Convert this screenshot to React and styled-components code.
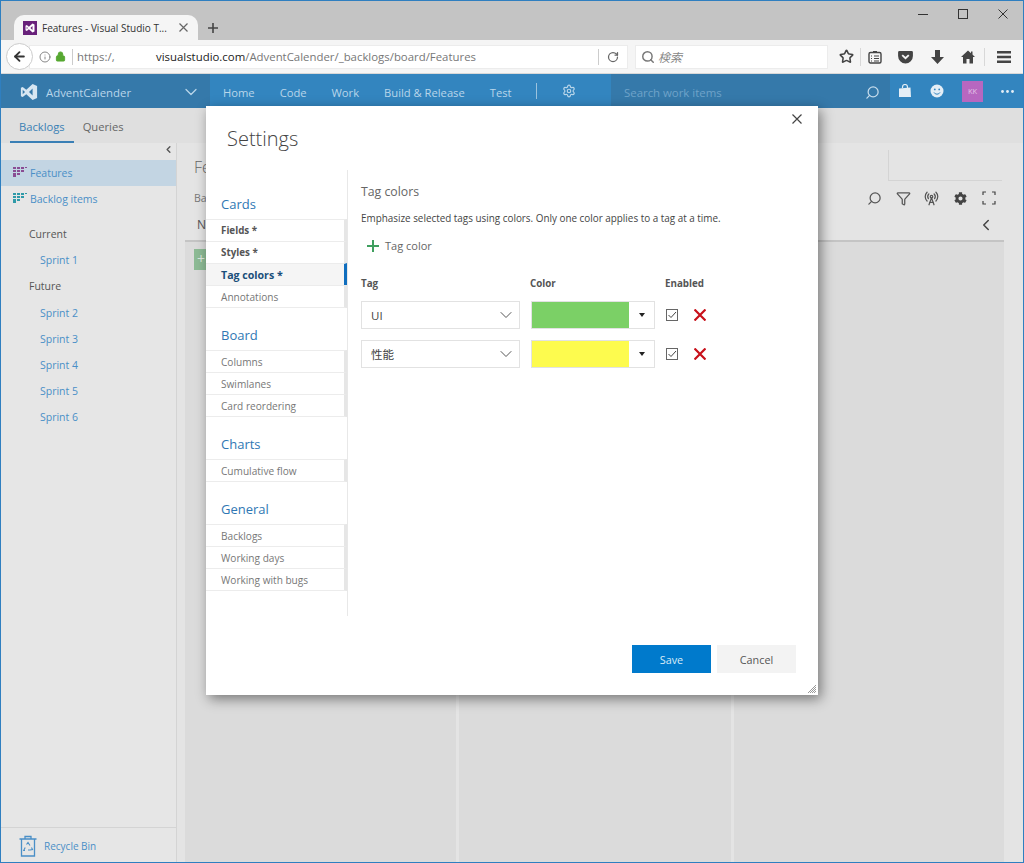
import React from "react"
import styled, { createGlobalStyle } from "styled-components"
import { ChevronDown, ChevronLeft, Search, Filter, Settings as Gear, RotateCw, Star, ArrowLeft, Info, Lock, RadioTower } from "lucide-react"
import { FaCog } from "react-icons/fa"

const Global = createGlobalStyle`
  html, body { margin: 0; padding: 0; background: #c4c4c4; }
  body { font-family: "Open Sans", "Noto Sans CJK JP", sans-serif; font-size: 11px; overflow: hidden; }
`

const Win = styled.div`
  position: relative;
  width: 1024px;
  height: 863px;
  box-sizing: border-box;
  border: 1px solid #2f7fc0;
  display: flex;
  flex-direction: column;
  overflow: hidden;
`
const TitleBar = styled.div`
  height: 39px;
  background: #c4c4c4;
  display: flex;
  align-items: flex-end;
  padding-left: 13px;
  flex: none;
`
const Tab = styled.div`
  width: 184px;
  height: 25px;
  background: #f5f5f5;
  border-radius: 10px 10px 0 0;
  display: flex;
  align-items: center;
  padding: 0 10px 0 9px;
  box-sizing: border-box;
  color: #333;
  font-size: 10px;
  gap: 5px;
`
const TabTitle = styled.span`
  flex: 1;
  white-space: nowrap;
`
const Favicon = styled.svg`
  width: 14px;
  height: 14px;
  flex: none;
`
const NewTab = styled.div`
  margin: 0 0 7px 10px;
  display: flex;
`
const WinButtons = styled.div`
  margin-left: auto;
  align-self: flex-start;
  display: flex;
  gap: 30px;
  padding: 8px 15px 0 0;
  color: #333;
`
const WinMin = styled.div`
  width: 10px;
  height: 10px;
  position: relative;
  &::after {
    content: "";
    position: absolute;
    left: 0;
    right: 0;
    top: 5px;
    height: 1px;
    background: #333;
  }
`
const WinMax = styled.div`
  width: 8px;
  height: 8px;
  border: 1px solid #333;
`
const Toolbar = styled.div`
  height: 34px;
  flex: none;
  background: #f5f5f5;
  border-bottom: 1px solid #d8d8d8;
  box-sizing: border-box;
  display: flex;
  align-items: center;
  padding-left: 5px;
`
const BackBtn = styled.div`
  width: 27px;
  height: 27px;
  border-radius: 50%;
  border: 1px solid #ccc;
  background: #fff;
  box-sizing: border-box;
  display: flex;
  align-items: center;
  justify-content: center;
  color: #333;
  flex: none;
  z-index: 1;
`
const UrlBar = styled.div`
  width: 599px;
  height: 24px;
  margin-left: -4px;
  background: #fff;
  border: 1px solid #ececec;
  display: flex;
  align-items: center;
  padding-left: 9px;
  box-sizing: border-box;
  font-size: 11.4px;
  color: #777;
  white-space: nowrap;
  flex: none;
  svg { flex: none; }
`
const UrlScheme = styled.span`
  margin-left: 4px;
  width: 79px;
  flex: none;
`
const UrlMain = styled.span`
  color: #222;
`
const UrlPath = styled.span`
  flex: 1;
`
const Sep = styled.span`
  width: 1px;
  height: 16px;
  background: ${p => p.$color || "#ccc"};
  flex: none;
  margin-left: ${p => p.$left || 0}px;
`
const SearchBox = styled.div`
  width: 193px;
  height: 24px;
  margin-left: 7px;
  background: #fff;
  border: 1px solid #ececec;
  display: flex;
  align-items: center;
  gap: 3px;
  padding-left: 5px;
  box-sizing: border-box;
  color: #888;
  font-style: italic;
  font-size: 12px;
  flex: none;
`
const ToolSlot = styled.div`
  width: ${p => p.$w}px;
  height: 18px;
  flex: none;
  display: flex;
  align-items: center;
  justify-content: center;
  color: #444;
  box-sizing: border-box;
  border-left: ${p => (p.$sep ? "1px solid #d8d8d8" : "none")};
`
const ToolIcons = styled.div`
  display: flex;
  align-items: center;
  margin-left: 4px;
`
const NavBar = styled.div`
  height: 34px;
  flex: none;
  background: #3385bf;
  display: flex;
  align-items: center;
  color: #b9d6ea;
  font-size: 11.2px;
`
const Project = styled.div`
  width: 209px;
  height: 100%;
  flex: none;
  background: #3579aa;
  display: flex;
  align-items: center;
  padding: 2px 9px 0 19px;
  box-sizing: border-box;
  gap: 8px;
`
const ProjectName = styled.span`
  flex: 1;
  font-size: 11.4px;
`
const NavItem = styled.span`
  margin-left: ${p => p.$left}px;
  padding-top: 2px;
  white-space: nowrap;
`
const NavSearch = styled.div`
  width: 279px;
  height: 100%;
  margin-left: auto;
  background: #3579aa;
  flex: none;
  display: flex;
  align-items: center;
  justify-content: space-between;
  padding: 2px 10px 0 13px;
  box-sizing: border-box;
  color: #6fa3c9;
  font-size: 11.4px;
`
const NavIcons = styled.div`
  width: 133px;
  flex: none;
  box-sizing: border-box;
  display: flex;
  align-items: center;
  gap: 18px;
  padding-left: 8px;
`
const Avatar = styled.div`
  width: 21px;
  height: 21px;
  background: #b767c0;
  color: #e3c3e6;
  font-size: 7.5px;
  display: flex;
  align-items: center;
  justify-content: center;
`
const SubNav = styled.div`
  height: 35px;
  flex: none;
  background: #dfdfdf;
  display: flex;
  padding-left: 9px;
  font-size: 11.2px;
  color: #666;
`
const SubTab = styled.div`
  padding: 4px 9px 0;
  height: 100%;
  box-sizing: border-box;
  display: flex;
  align-items: center;
  justify-content: center;
  color: ${p => (p.$active ? "#3a7fb5" : "#666")};
  border-bottom: 2px solid ${p => (p.$active ? "#3a7fb5" : "transparent")};
`
const Body = styled.div`
  flex: 1;
  display: flex;
  min-height: 0;
`
const Side = styled.div`
  width: 175px;
  flex: none;
  background: #e6e6e6;
  border-right: 1px solid #d4d4d4;
  display: flex;
  flex-direction: column;
`
const Collapse = styled.div`
  height: 17px;
  box-sizing: border-box;
  padding: 0 2px 4px 0;
  display: flex;
  justify-content: flex-end;
  align-items: center;
  color: #555;
`
const SideRow = styled.div`
  height: 26px;
  flex: none;
  display: flex;
  align-items: center;
  gap: 2px;
  padding-left: ${p => p.$pad || 12}px;
  background: ${p => (p.$active ? "#c3d5e3" : "transparent")};
  color: ${p => p.$color || "#4a8fc7"};
  font-size: 10.5px;
`
const SideGap = styled.div`
  height: ${p => p.$h}px;
  flex: none;
`
const Bin = styled.div`
  margin-top: auto;
  height: 35px;
  border-top: 1px solid #d4d4d4;
  box-sizing: border-box;
  display: flex;
  align-items: center;
  gap: 7px;
  padding: 1px 0 0 18px;
  color: #4a8fc7;
  font-size: 10px;
`
const Main = styled.div`
  flex: 1;
  background: #e4e4e4;
  display: flex;
  flex-direction: column;
  padding-left: 8px;
  min-width: 0;
`
const MainHead = styled.div`
  height: 97px;
  flex: none;
  box-sizing: border-box;
  display: flex;
  justify-content: space-between;
  align-items: flex-start;
  padding: 7px 21px 0 9px;
`
const HeadText = styled.div`
  display: flex;
  flex-direction: column;
`
const MainTitle = styled.div`
  color: #666;
  font-size: 16px;
  font-weight: 300;
  line-height: 22px;
  margin-top: 6px;
`
const MainCrumb = styled.div`
  color: #777;
  font-size: 10.5px;
  line-height: 14px;
  margin-top: 13px;
`
const MainCol = styled.div`
  color: #555;
  font-size: 12px;
  line-height: 16px;
  margin: 12px 0 0 3px;
`
const Corner = styled.div`
  width: 114px;
  height: 31px;
  box-sizing: border-box;
  border-left: 1px solid #d4d4d4;
  border-bottom: 1px solid #d4d4d4;
`
const BoardTools = styled.div`
  position: absolute;
  right: 20px;
  top: 189px;
  display: flex;
  align-items: center;
  color: #555;
`
const BoardTool = styled.div`
  width: 28.5px;
  height: 16px;
  display: flex;
  align-items: center;
  justify-content: center;
`
const BoardBack = styled.div`
  position: absolute;
  right: 28px;
  top: 215px;
  color: #444;
  display: flex;
`
const Board = styled.div`
  flex: 1;
  border-top: 2px solid #c4c4c4;
  margin-right: 19px;
  display: grid;
  grid-template-columns: 271px 272px 1fr;
  gap: 3px;
`
const Lane = styled.div`
  background: #dbdbdb;
  position: relative;
`
const AddBadge = styled.div`
  position: absolute;
  left: 9px;
  top: 7px;
  width: 18px;
  height: 21px;
  background: #8dbb95;
  color: #dfe9e0;
  font-size: 14px;
  line-height: 20px;
  padding-left: 3px;
  box-sizing: border-box;
`
const Modal = styled.div`
  position: absolute;
  left: 205px;
  top: 105px;
  width: 612px;
  height: 589px;
  background: #fff;
  box-shadow: 3px 4px 12px rgba(0, 0, 0, 0.45);
  display: flex;
  flex-direction: column;
`
const CloseBtn = styled.div`
  position: absolute;
  right: 16px;
  top: 8px;
  color: #444;
  display: flex;
`
const ModalTitle = styled.div`
  height: 64px;
  flex: none;
  padding: 19px 0 0 21px;
  box-sizing: border-box;
  font-size: 20px;
  font-weight: 300;
  color: #444;
  line-height: 28px;
`
const ModalBody = styled.div`
  height: 446px;
  flex: none;
  display: flex;
`
const SettingsMenu = styled.div`
  width: 141px;
  flex: none;
  border-right: 1px solid #e8e8e8;
`
const GroupTitle = styled.div`
  height: ${p => (p.$first ? 49 : 42)}px;
  box-sizing: border-box;
  padding: ${p => (p.$first ? 19 : 12)}px 0 0 15px;
  font-size: 13px;
  line-height: 30px;
  color: #2f77b4;
`
const MenuItem = styled.div`
  height: 22px;
  box-sizing: border-box;
  display: flex;
  align-items: center;
  padding-left: 15px;
  border-top: 1px solid #ececec;
  border-right: 3px solid ${p => (p.$active ? "#106ebe" : "#e6e6e6")};
  font-size: ${p => (p.$active ? 10.6 : p.$bold ? 9.8 : 10.1)}px;
  font-weight: ${p => (p.$bold ? 700 : 400)};
  color: ${p => (p.$active ? "#1b4f7a" : p.$bold ? "#555" : "#777")};
  background: ${p => (p.$active ? "#f5f5f5" : "#fff")};
  &:last-child { border-bottom: 1px solid #ececec; height: 23px; }
`
const Group = styled.div``
const Pane = styled.div`
  flex: 1;
  padding: 13px 0 0 13px;
  color: #444;
`
const PaneTitle = styled.div`
  font-size: 12.3px;
  color: #666;
  line-height: 18px;
`
const PaneDesc = styled.div`
  font-size: 9.9px;
  color: #444;
  margin-top: 10px;
  line-height: 14px;
`
const AddTag = styled.div`
  display: flex;
  align-items: center;
  gap: 6px;
  margin: 13px 0 0 6px;
  font-size: 11px;
  color: #666;
  line-height: 16px;
`
const Grid = styled.div`
  display: grid;
  grid-template-columns: 159px 124px 1fr;
  column-gap: 11px;
  margin-top: 23px;
`
const HeadCell = styled.div`
  font-size: 9.8px;
  font-weight: 700;
  color: #555;
  height: 18px;
  margin: 0 0 6px ${p => (p.$nudge ? -1 : 0)}px;
  line-height: 14px;
`
const SelectBox = styled.div`
  height: 28px;
  box-sizing: border-box;
  border: 1px solid #e2e2e2;
  display: flex;
  align-items: center;
  justify-content: space-between;
  padding: 0 3px 0 9px;
  font-size: 11.5px;
  color: #444;
  margin-bottom: 11px;
`
const ColorBox = styled.div`
  height: 28px;
  box-sizing: border-box;
  border: 1px solid #e2e2e2;
  display: flex;
  margin-bottom: 11px;
`
const Swatch = styled.div`
  width: 97px;
  background: ${p => p.$color};
`
const Caret = styled.div`
  flex: 1;
  display: flex;
  align-items: center;
  justify-content: center;
  &::after {
    content: "";
    border-left: 3.5px solid transparent;
    border-right: 3.5px solid transparent;
    border-top: 4px solid #222;
  }
`
const EnabledCell = styled.div`
  height: 28px;
  display: flex;
  align-items: center;
  gap: 16px;
`
const CheckBox = styled.div`
  width: 10px;
  height: 10px;
  border: 1px solid #666;
  display: flex;
  align-items: center;
  justify-content: center;
  color: #333;
`
const Footer = styled.div`
  display: flex;
  justify-content: flex-end;
  gap: 6px;
  padding: 29px 22px 0 0;
`
const Btn = styled.div`
  width: 79px;
  height: 28px;
  display: flex;
  align-items: center;
  justify-content: center;
  font-size: 10.8px;
  background: ${p => (p.$primary ? "#007acc" : "#f3f3f3")};
  color: ${p => (p.$primary ? "#d9ecf8" : "#555")};
`
const Grip = styled.svg`
  position: absolute;
  right: 1px;
  bottom: 1px;
`

function Cross({ size, color = "currentColor", width = 1.2 }) {
  return (
    <svg width={size} height={size} viewBox={`0 0 ${size} ${size}`} fill="none" stroke={color} strokeWidth={width} style={{ flex: "none" }}>
      <path d={`M0.5 0.5L${size - 0.5} ${size - 0.5}M${size - 0.5} 0.5L0.5 ${size - 0.5}`} />
    </svg>
  )
}

function PlusMark({ size, color, width }) {
  const m = size / 2
  return (
    <svg width={size} height={size} viewBox={`0 0 ${size} ${size}`} fill="none" stroke={color} strokeWidth={width} style={{ flex: "none" }}>
      <path d={`M${m} 0V${size}M0 ${m}H${size}`} />
    </svg>
  )
}

function BacklogIcon({ color }) {
  return (
    <svg width="14" height="10" viewBox="0 0 14 10" fill={color} style={{ flex: "none", marginRight: 1, marginTop: -3 }}>
      <path d="M0 0h3v2H0zM4 0h3v2H4zM8 0h3v2H8zM12 0h2v1h-2zM0 3h3v2H0zM4 3h3v2H4zM8 3h3v2H8zM0 6h3v2H0zM4 6h3v2H4zM0 8h3v2H0z" />
    </svg>
  )
}

function VsLogo({ color, size }) {
  return (
    <svg width={size} height={size} viewBox="0 0 20 20" fill={color} style={{ flex: "none" }}>
      <path d="M14 1l5 2.2v13.6L14 19l-7-6.4L3 15.6 1 14.6V5.4l2-1 4 3zM14 6l-4 4 4 4zM3 7.4v5.2L5.6 10z" fillRule="evenodd" />
    </svg>
  )
}

function ClipIcon() {
  return (
    <svg width="14" height="14" viewBox="0 0 14 14" fill="none" stroke="#444" strokeWidth="1.4">
      <rect x="1" y="2.5" width="12" height="10.5" rx="1.5" />
      <path d="M5 1.5h4M3 6h1M6 6h5M3 8.5h1M6 8.5h5M3 11h1M6 11h5" strokeWidth="1.1" />
    </svg>
  )
}

function PocketIcon() {
  return (
    <svg width="15" height="14" viewBox="0 0 16 14">
      <path d="M1.5 0.5h13a1.4 1.4 0 0 1 1.4 1.4V6a7.9 7.9 0 0 1-15.8 0V1.9A1.4 1.4 0 0 1 1.5 0.5z" fill="#444" />
      <path d="M4.5 5L8 8.3 11.5 5" fill="none" stroke="#f5f5f5" strokeWidth="2" />
    </svg>
  )
}

function DownIcon() {
  return (
    <svg width="13" height="14" viewBox="0 0 13 14" fill="#444">
      <path d="M4 0h5v7h4l-6.5 7L0 7h4z" />
    </svg>
  )
}

function HomeIcon() {
  return (
    <svg width="14" height="14" viewBox="0 0 14 14" fill="#444">
      <path d="M7 0.5L0 7h2v6.5h3.5V9h3v4.5H12V7h2L11.5 4.6V1.5H10v1.7z" />
    </svg>
  )
}

function BurgerIcon() {
  return (
    <svg width="14" height="12" viewBox="0 0 14 12" fill="#444">
      <path d="M0 0h14v2.4H0zM0 4.8h14v2.4H0zM0 9.6h14V12H0z" />
    </svg>
  )
}

function BagIcon() {
  return (
    <svg width="14" height="14" viewBox="0 0 14 14">
      <path d="M4.5 4V3a2.5 2.5 0 0 1 5 0v1" fill="none" stroke="#e4eef6" strokeWidth="1.2" />
      <path d="M1 4.5L12.5 3.5 13 13H1z" fill="#e4eef6" />
    </svg>
  )
}

function SmileIcon() {
  return (
    <svg width="14" height="14" viewBox="0 0 14 14">
      <circle cx="7" cy="7" r="6.5" fill="#e4eef6" />
      <circle cx="4.8" cy="5.4" r="0.9" fill="#3385bf" />
      <circle cx="9.2" cy="5.4" r="0.9" fill="#3385bf" />
      <path d="M4 8.4a3.4 3.4 0 0 0 6 0" fill="none" stroke="#3385bf" strokeWidth="1" />
    </svg>
  )
}

function DotsIcon() {
  return (
    <svg width="13" height="3" viewBox="0 0 13 3" fill="#e4eef6">
      <circle cx="1.5" cy="1.5" r="1.4" />
      <circle cx="6.5" cy="1.5" r="1.4" />
      <circle cx="11.5" cy="1.5" r="1.4" />
    </svg>
  )
}

function CheckMark() {
  return (
    <svg width="10" height="8" viewBox="0 0 10 8" fill="none" stroke="#444" strokeWidth="1" style={{ flex: "none" }}>
      <path d="M1.5 4l2.5 2.5 5-5.5" />
    </svg>
  )
}

function RecycleIcon() {
  return (
    <svg width="18" height="22" viewBox="0 0 18 22" fill="none" stroke="#4a8fc7" strokeWidth="1.3" style={{ flex: "none" }}>
      <path d="M0.5 4h17M6 4V1.5h6V4M2.5 4v17h13V4" />
      <path d="M7.5 9.5L9 7.5l2 3M12.5 12.5l1 2-2.5.5H9M6 15.5H4.7l1.5-3" strokeWidth="1.1" />
    </svg>
  )
}

const groups = [
  { title: "Cards", first: true, items: [["Fields *", 1], ["Styles *", 1], ["Tag colors *", 2], ["Annotations", 0]] },
  { title: "Board", items: [["Columns", 0], ["Swimlanes", 0], ["Card reordering", 0]] },
  { title: "Charts", items: [["Cumulative flow", 0]] },
  { title: "General", items: [["Backlogs", 0], ["Working days", 0], ["Working with bugs", 0]] },
]

const tags = [
  { name: "UI", color: "#7bd066" },
  { name: "性能", color: "#fdfb4e" },
]

export default function App() {
  return (
    <Win>
      <Global />
      <TitleBar>
        <Tab>
          <Favicon viewBox="0 0 14 14">
            <rect width="14" height="14" fill="#68217a" />
            <path d="M9.5 2.5l2 1v7l-2 1-3.6-3.3L3.8 10 2.5 9.3V4.7L3.8 4l2.1 1.8zM9.5 5L7.4 7l2.1 2zM3.7 5.8v2.4L4.9 7z" fill="#fff" fillRule="evenodd" />
          </Favicon>
          <TabTitle>Features - Visual Studio T...</TabTitle>
          <Cross size={9} color="#666" />
        </Tab>
        <NewTab><PlusMark size={10} color="#444" width={1.6} /></NewTab>
        <WinButtons>
          <WinMin />
          <WinMax />
          <Cross size={10} color="#333" width={1} />
        </WinButtons>
      </TitleBar>
      <Toolbar>
        <BackBtn><ArrowLeft size={15} strokeWidth={3} /></BackBtn>
        <UrlBar>
          <Info size={12} color="#888" />
          <Lock size={11} color="#57a831" fill="#57a831" style={{ marginLeft: 4 }} />
          <Sep $left={6} />
          <UrlScheme>https:/,</UrlScheme>
          <UrlPath><UrlMain>visualstudio.com</UrlMain>/AdventCalender/_backlogs/board/Features</UrlPath>
          <Sep />
          <RotateCw size={12} color="#666" strokeWidth={2.5} style={{ margin: "0 8px" }} />
        </UrlBar>
        <SearchBox><Search size={14} strokeWidth={2.5} color="#777" />検索</SearchBox>
        <ToolIcons>
          <ToolSlot $w={28}><Star size={15} strokeWidth={2.5} color="#444" /></ToolSlot>
          <ToolSlot $w={28} $sep><ClipIcon /></ToolSlot>
          <ToolSlot $w={34}><PocketIcon /></ToolSlot>
          <ToolSlot $w={30}><DownIcon /></ToolSlot>
          <ToolSlot $w={32}><HomeIcon /></ToolSlot>
          <ToolSlot $w={38} $sep><BurgerIcon /></ToolSlot>
        </ToolIcons>
      </Toolbar>
      <NavBar>
        <Project>
          <VsLogo color="#d6e6f2" size={18} />
          <ProjectName>AdventCalender</ProjectName>
          <ChevronDown size={20} strokeWidth={1.5} />
        </Project>
        <NavItem $left={13}>Home</NavItem>
        <NavItem $left={25}>Code</NavItem>
        <NavItem $left={25}>Work</NavItem>
        <NavItem $left={25}>Build &amp; Release</NavItem>
        <NavItem $left={25}>Test</NavItem>
        <Sep $left={25} $color="#9cc3de" />
        <Gear size={14} style={{ marginLeft: 25 }} />
        <NavSearch>Search work items<Search size={15} color="#c6dcec" style={{ transform: "scaleX(-1)" }} /></NavSearch>
        <NavIcons>
          <BagIcon />
          <SmileIcon />
          <Avatar>KK</Avatar>
          <DotsIcon />
        </NavIcons>
      </NavBar>
      <SubNav>
        <SubTab $active>Backlogs</SubTab>
        <SubTab>Queries</SubTab>
      </SubNav>
      <Body>
        <Side>
          <Collapse><ChevronLeft size={11} strokeWidth={3} /></Collapse>
          <SideRow $active><BacklogIcon color="#8a4d93" />Features</SideRow>
          <SideRow><BacklogIcon color="#2f9aa8" />Backlog items</SideRow>
          <SideGap $h={9} />
          <SideRow $pad={28} $color="#555">Current</SideRow>
          <SideRow $pad={39}>Sprint 1</SideRow>
          <SideRow $pad={28} $color="#555">Future</SideRow>
          <SideGap $h={1} />
          <SideRow $pad={39}>Sprint 2</SideRow>
          <SideRow $pad={39}>Sprint 3</SideRow>
          <SideRow $pad={39}>Sprint 4</SideRow>
          <SideRow $pad={39}>Sprint 5</SideRow>
          <SideRow $pad={39}>Sprint 6</SideRow>
          <Bin>
            <RecycleIcon />
            Recycle Bin
          </Bin>
        </Side>
        <Main>
          <MainHead>
            <HeadText>
              <MainTitle>Fe</MainTitle>
              <MainCrumb>Ba</MainCrumb>
              <MainCol>N</MainCol>
            </HeadText>
            <Corner />
          </MainHead>
          <Board>
            <Lane><AddBadge>+</AddBadge></Lane>
            <Lane />
            <Lane />
          </Board>
        </Main>
      </Body>
      <BoardTools>
        <BoardTool><Search size={15} style={{ transform: "scaleX(-1)" }} /></BoardTool>
        <BoardTool><Filter size={15} /></BoardTool>
        <BoardTool><RadioTower size={15} /></BoardTool>
        <BoardTool><FaCog size={13} color="#444" /></BoardTool>
        <BoardTool>
          <svg width="14" height="14" viewBox="0 0 14 14" fill="none" stroke="#444" strokeWidth="1.2">
            <path d="M1 4V1h3M10 1h3v3M13 10v3h-3M4 13H1v-3" />
          </svg>
        </BoardTool>
      </BoardTools>
      <BoardBack><ChevronLeft size={18} strokeWidth={2} /></BoardBack>
      <Modal>
        <CloseBtn><Cross size={10} /></CloseBtn>
        <ModalTitle>Settings</ModalTitle>
        <ModalBody>
          <SettingsMenu>
            {groups.map(group => (
              <Group key={group.title}>
                <GroupTitle $first={group.first}>{group.title}</GroupTitle>
                {group.items.map(([label, kind]) => (
                  <MenuItem key={label} $bold={kind > 0} $active={kind === 2}>{label}</MenuItem>
                ))}
              </Group>
            ))}
          </SettingsMenu>
          <Pane>
            <PaneTitle>Tag colors</PaneTitle>
            <PaneDesc>Emphasize selected tags using colors. Only one color applies to a tag at a time.</PaneDesc>
            <AddTag><PlusMark size={12} color="#3f9f5f" width={2} />Tag color</AddTag>
            <Grid>
              <HeadCell>Tag</HeadCell>
              <HeadCell $nudge>Color</HeadCell>
              <HeadCell $nudge>Enabled</HeadCell>
              {tags.map(tag => (
                <React.Fragment key={tag.name}>
                  <SelectBox>{tag.name}<ChevronDown size={20} color="#555" strokeWidth={1.2} /></SelectBox>
                  <ColorBox><Swatch $color={tag.color} /><Caret /></ColorBox>
                  <EnabledCell>
                    <CheckBox><CheckMark /></CheckBox>
                    <Cross size={12} color="#c8101a" width={2.2} />
                  </EnabledCell>
                </React.Fragment>
              ))}
            </Grid>
          </Pane>
        </ModalBody>
        <Footer>
          <Btn $primary>Save</Btn>
          <Btn>Cancel</Btn>
        </Footer>
        <Grip width="10" height="10" viewBox="0 0 10 10" stroke="#999" strokeWidth="1">
          <path d="M9 1L1 9M9 3L3 9M9 5L5 9M9 7L7 9" />
        </Grip>
      </Modal>
    </Win>
  )
}
